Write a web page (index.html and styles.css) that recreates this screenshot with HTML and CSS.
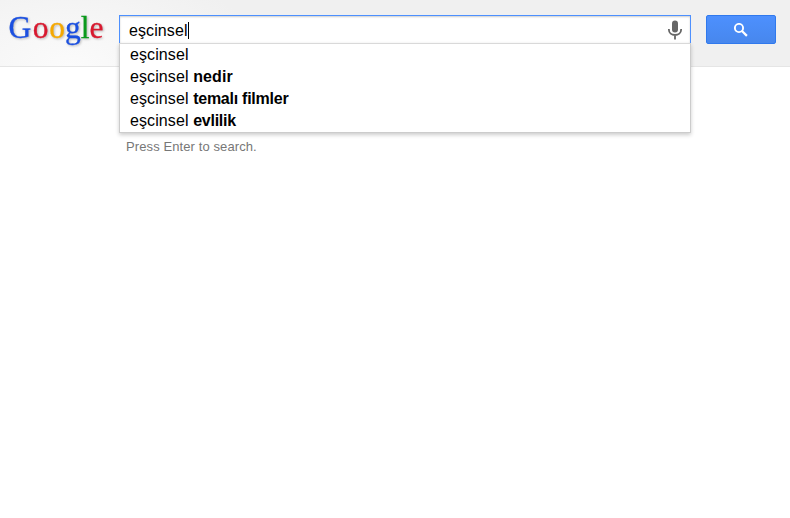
FILE: index.html
```html
<!DOCTYPE html>
<html lang="en">
<head>
  <meta charset="UTF-8">
  <meta name="viewport" content="width=device-width, initial-scale=1.0">
  <title>Google</title>
  <link rel="stylesheet" href="styles.css">
</head>
<body>
  <header class="header">
    <a class="logo" href="#">
      <svg width="106" height="50" viewBox="0 0 106 50" role="img" aria-label="Google">
        <text class="logo-text" y="38" x="8.6 32.7 49.2 65 80.8 89.6"><tspan class="blue">G</tspan><tspan class="red">o</tspan><tspan class="yellow">o</tspan><tspan class="blue">g</tspan><tspan class="green">l</tspan><tspan class="red">e</tspan></text>
      </svg>
    </a>

    <div class="search">
      <div class="search-box">
        <span class="query">eşcinsel</span><span class="caret"></span>
        <svg class="mic" width="14" height="20" viewBox="0 0 14 20">
          <rect x="4" y="0.5" width="6" height="12" rx="3" fill="#666"/>
          <path d="M0.9 9v0.8c0 3.2 2.7 5.2 6.1 5.2s6.1-2 6.1-5.2V9M7 15v4.5" fill="none" stroke="#666" stroke-width="1.8"/>
        </svg>
      </div>
      <!-- Suggestions -->
      <div class="dropdown">
        <ul class="suggestions">
          <li>eşcinsel</li>
          <li>eşcinsel <b>nedir</b></li>
          <li>eşcinsel <b class="tight">temalı filmler</b></li>
          <li>eşcinsel <b class="tight">evlilik</b></li>
        </ul>
        <div class="hint">Press Enter to search.</div>
      </div>
    </div>

    <button class="search-button" aria-label="Search">
      <svg width="14" height="14" viewBox="0 0 14 14" fill="none" stroke="#fff">
        <circle cx="5" cy="5" r="4.1" stroke-width="1.9"/>
        <path d="M8 8l4.9 4.9" stroke-width="2.2"/>
      </svg>
    </button>
  </header>
</body>
</html>
```
FILE: styles.css
```css
body {
  margin: 0;
  min-height: 100vh;
  background: #fff;
  font-family: "Liberation Sans", Arial, sans-serif;
}

.header {
  display: flex;
  align-items: flex-start;
  height: 66px;
  border-bottom: 1px solid #e5e5e5;
  background: radial-gradient(ellipse 200px 100px at 70px 66px, #fbfbfb, #f0f0f0);
}

.logo {
  width: 119px;
  flex: none;
}

.logo svg {
  display: block;
}

.logo-text {
  font-family: "Liberation Serif", "Times New Roman", serif;
  font-size: 31.5px;
  stroke-width: 0.3px;
  filter: drop-shadow(1px 1px 1px rgba(0, 0, 0, 0.25));
}

.blue {
  fill: #1a4fe0;
  stroke: #1a4fe0;
}

.red {
  fill: #d8192f;
  stroke: #d8192f;
}

.yellow {
  fill: #f5a800;
  stroke: #f5a800;
}

.green {
  fill: #0a9a1c;
  stroke: #0a9a1c;
}

.search {
  position: relative;
  width: 572px;
  flex: none;
  margin-top: 15px;
}

.search-box {
  box-sizing: border-box;
  display: flex;
  align-items: center;
  height: 29px;
  padding: 2px 8px 0 9px;
  border: 1px solid #4d90fe;
  background: #fff;
  box-shadow: inset 0 1px 2px rgba(0, 0, 0, 0.2);
  font-size: 16px;
  color: #000;
}

.query {
  letter-spacing: 0.1px;
}

.caret {
  width: 1px;
  height: 17px;
  background: #000;
}

.mic {
  margin: 0 0 1px auto;
}

.dropdown {
  position: absolute;
  top: 28px;
  left: 0;
  width: 100%;
}

.suggestions {
  margin: 0;
  padding: 0;
  list-style: none;
  border: 1px solid #ccc;
  border-top-color: #d9d9d9;
  background: #fff;
  box-shadow: 0 2px 4px rgba(0, 0, 0, 0.2);
}

.suggestions li {
  padding-left: 10px;
  font-size: 16px;
  line-height: 22px;
  letter-spacing: 0.1px;
  color: #000;
}

.suggestions .tight {
  letter-spacing: -0.25px;
}

.hint {
  padding: 6px 7px;
  font-size: 13px;
  line-height: 16px;
  letter-spacing: 0.1px;
  color: #777;
}

.search-button {
  display: flex;
  align-items: center;
  justify-content: center;
  width: 70px;
  height: 29px;
  margin: 15px 0 0 15px;
  padding: 0;
  border: 1px solid #3079ed;
  border-radius: 2px;
  background: linear-gradient(#4d90fe, #4787ed);
}
```
